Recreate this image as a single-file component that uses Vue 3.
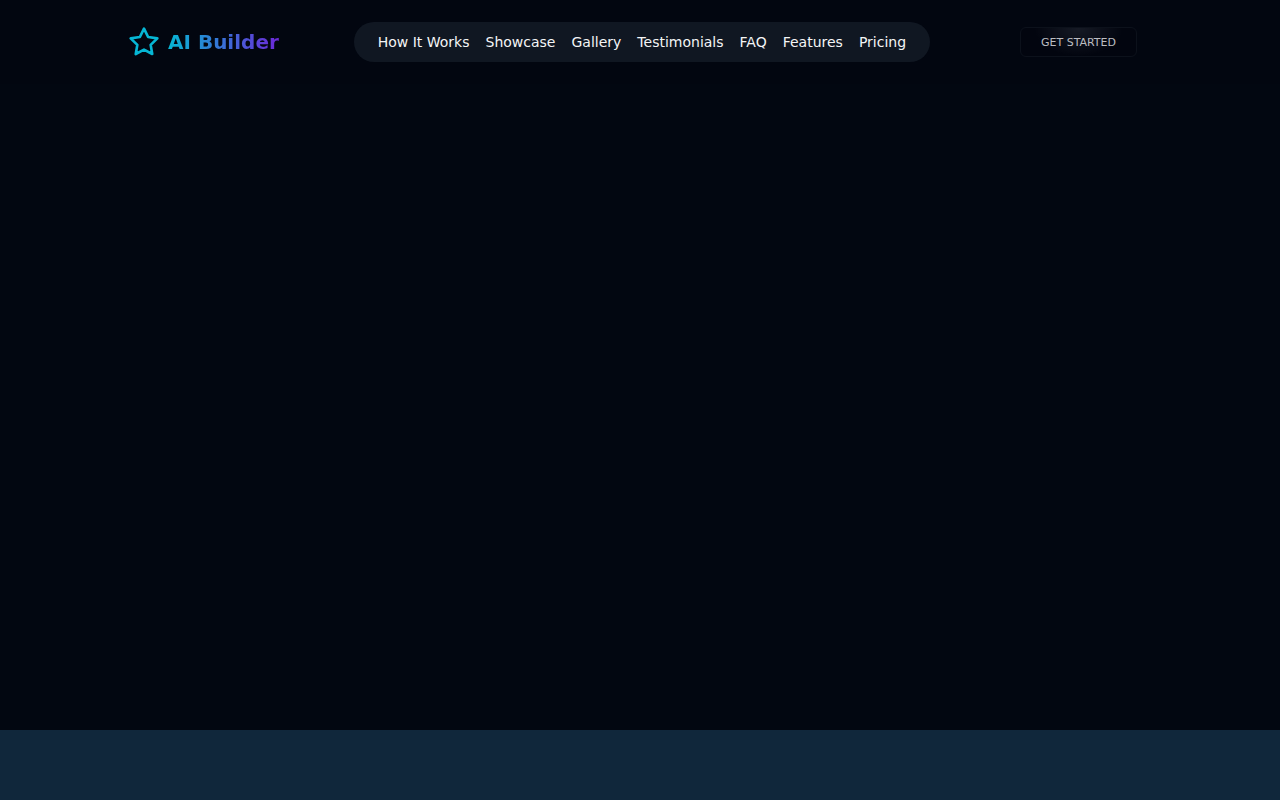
<script setup>
const links = [
  { label: 'How It Works', href: '#how-it-works' },
  { label: 'Showcase', href: '#showcase' },
  { label: 'Gallery', href: '#gallery' },
  { label: 'Testimonials', href: '#testimonials' },
  { label: 'FAQ', href: '#faq' },
  { label: 'Features', href: '#features' },
  { label: 'Pricing', href: '#pricing' },
]
</script>

<template>
  <div class="page">
    <header class="header">
      <div class="bar">
        <a class="brand" href="#">
          <svg class="star" viewBox="0 0 24 24" aria-hidden="true">
            <path d="M12 2l3.09 6.26L22 9.27l-5 4.87 1.18 6.88L12 17.77l-6.18 3.25L7 14.14 2 9.27l6.91-1.01L12 2z" />
          </svg>
          <span class="name">AI Builder</span>
        </a>
        <nav class="nav">
          <a v-for="link in links" :key="link.href" :href="link.href">{{ link.label }}</a>
        </nav>
        <div class="action">
          <button class="cta" type="button">GET STARTED</button>
        </div>
      </div>
    </header>
    <main class="hero"></main>
    <section class="band"></section>
  </div>
</template>

<style>
body {
  background: #020711;
}
</style>

<style scoped>
.page {
  display: flex;
  flex-direction: column;
  min-height: 100vh;
  background: #020711;
  font-family: "DejaVu Sans", sans-serif;
}
.header {
  padding: 22px 16px;
  background: #020610;
}
.bar {
  display: flex;
  align-items: center;
  justify-content: space-between;
  max-width: 1024px;
  margin: 0 auto;
}
.brand {
  display: flex;
  align-items: center;
  gap: 8px;
  text-decoration: none;
}
.star {
  width: 32px;
  height: 32px;
  fill: none;
  stroke: #06b6d4;
  stroke-width: 2;
  stroke-linecap: round;
  stroke-linejoin: round;
}
.name {
  font-size: 20px;
  line-height: 28px;
  font-weight: 700;
  color: transparent;
  background: linear-gradient(to right, #06b6d4, #6d28d9);
  background-clip: text;
}
.nav {
  display: flex;
  gap: 16px;
  padding: 10px 24px;
  border-radius: 20px;
  background: #101722;
}
.nav a {
  color: #f4f5f6;
  font-size: 14px;
  line-height: 20px;
  text-decoration: none;
}
.action {
  padding: 0 15px;
}
.cta {
  display: block;
  padding: 7px 20px 6px;
  border: 1px solid #0c111b;
  border-radius: 6px;
  background: radial-gradient(ellipse 44px 28px at 50% 0, #161a25, #02050f);
  color: #bcbdc1;
  font-family: inherit;
  font-size: 11px;
  line-height: 15px;
}
.hero {
  flex: 1;
}
.band {
  height: 70px;
  background: #10273b;
}
</style>
